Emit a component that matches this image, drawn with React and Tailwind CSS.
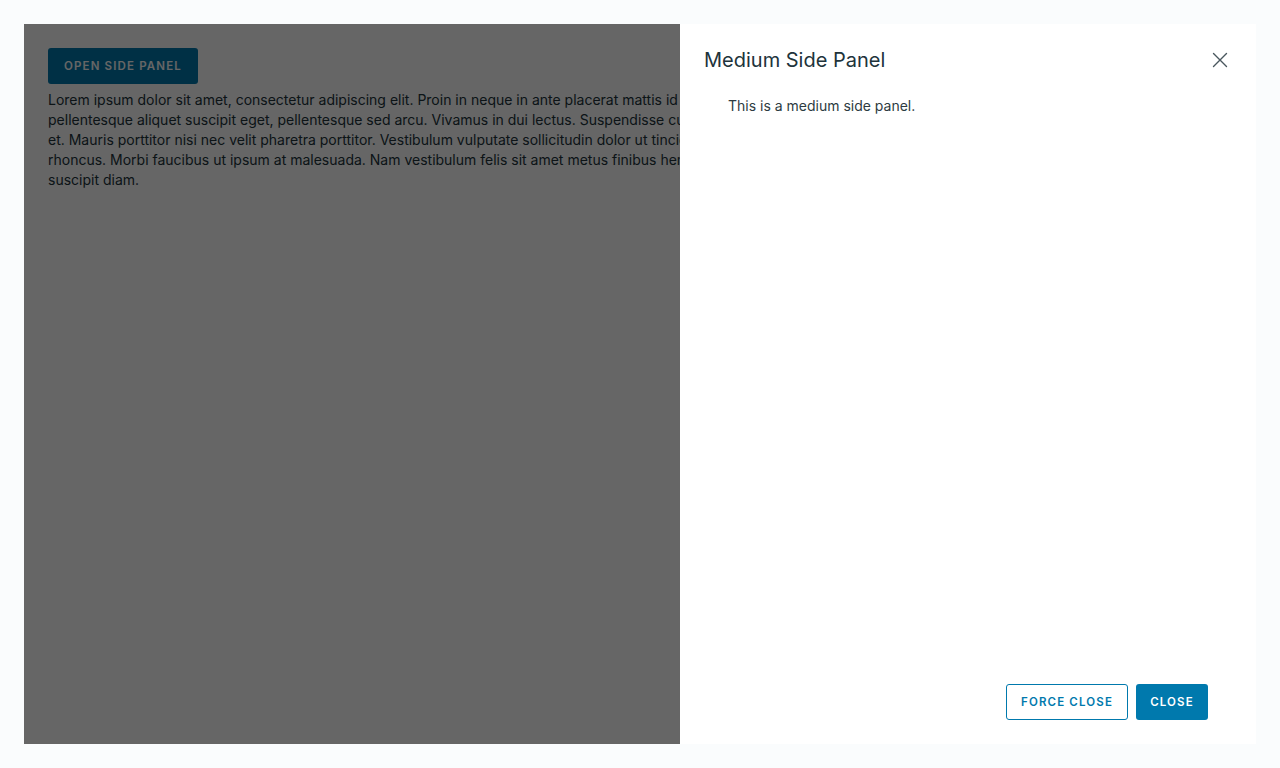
const lines = [
  'Lorem ipsum dolor sit amet, consectetur adipiscing elit. Proin in neque in ante placerat mattis id sed quam. Proin rhoncus lacus et tristique pharetra. Pellentesque massa ipsum,',
  'pellentesque aliquet suscipit eget, pellentesque sed arcu. Vivamus in dui lectus. Suspendisse cursus est ac nisl imperdiet viverra. Aenean sagittis nibh lacus, in eleifend urna ultrices',
  'et. Mauris porttitor nisi nec velit pharetra porttitor. Vestibulum vulputate sollicitudin dolor ut tincidunt. Phasellus vitae blandit felis. Nullam posuere ipsum tincidunt velit pulvinar, ac tincidunt risus',
  'rhoncus. Morbi faucibus ut ipsum at malesuada. Nam vestibulum felis sit amet metus finibus hendrerit. Fusce faucibus odio eget ex vulputate rhoncus. Fusce nec aliquam leo, quis',
  'suscipit diam.',
];

function CloseIcon() {
  return (
    <svg width="16" height="16" viewBox="0 0 16 16" fill="none" stroke="currentColor" strokeWidth="1.4" strokeLinecap="round">
      <path d="M1.5 1.5 L14.5 14.5 M14.5 1.5 L1.5 14.5" />
    </svg>
  );
}

function SidePanel() {
  return (
    <div className="absolute top-0 right-0 bottom-0 w-[576px] bg-white flex flex-col">
      <div className="flex items-center justify-between pl-6 pr-[28px] pt-[22px]">
        <h3 className="text-[20px] leading-[28px] text-[#21333b]">Medium Side Panel</h3>
        <button className="w-4 h-4 flex items-center justify-center text-[#49575e]">
          <CloseIcon />
        </button>
      </div>
      <div className="flex-1 pl-12 pt-[22px] text-[14px] leading-[20px] text-[#2d3b42]">
        This is a medium side panel.
      </div>
      <div className="flex justify-end gap-2 pr-12 pb-6">
        <button className="h-9 w-[122px] pt-[2px] rounded-[3px] border border-[#0079ad] bg-white text-[#0079ad] text-[11.5px] font-semibold tracking-[0.1em] uppercase">
          Force Close
        </button>
        <button className="h-9 w-[72px] pt-[2px] rounded-[3px] bg-[#0079ad] text-white text-[11.5px] font-semibold tracking-[0.1em] uppercase">
          Close
        </button>
      </div>
    </div>
  );
}

export default function App() {
  return (
    <div className="min-h-screen bg-[#fafcfd] p-6 font-['Inter',sans-serif]">
      <div className="relative h-[720px] bg-white overflow-hidden">
        <div className="w-[656px] overflow-hidden p-6 pr-0">
          <button className="h-9 w-[150px] pt-[2px] rounded-[3px] bg-[#0079ad] text-white text-[11.5px] font-semibold tracking-[0.1em] uppercase">
            Open Side Panel
          </button>
          <p className="mt-[6px] text-[14px] leading-[20px] text-[#21333b]">
            {lines.map((l, i) => (
              <span key={i} className="block whitespace-nowrap">{l}</span>
            ))}
          </p>
        </div>
        <div className="absolute inset-0 bg-black/60" />
        <SidePanel />
      </div>
    </div>
  );
}
